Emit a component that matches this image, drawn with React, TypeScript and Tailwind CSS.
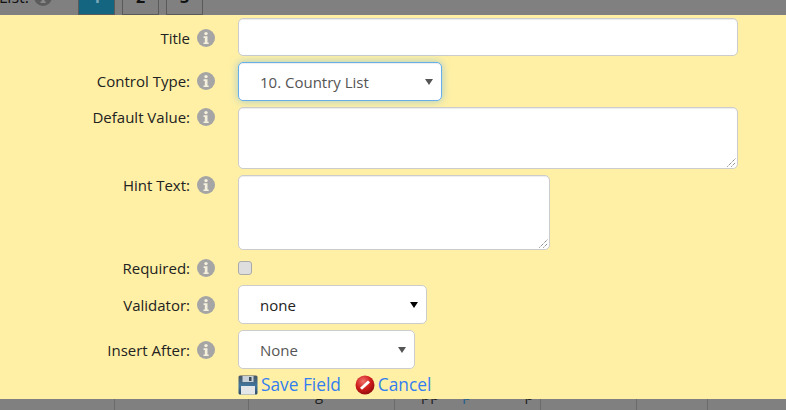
const font = { fontFamily: '"Open Sans", sans-serif' };

function InfoIcon({ className = "text-[#a5a5a5]", glyph = "#f4f0dc" }: { className?: string; glyph?: string }) {
  return (
    <svg viewBox="0 0 18 18" className={`h-[18px] w-[18px] shrink-0 ${className}`} aria-hidden="true">
      <circle cx="9" cy="9" r="9" fill="currentColor" />
      <circle cx="9" cy="4.6" r="1.7" fill={glyph} />
      <path d="M6.6 7.3h3.9v6.2h1.2v1.6H6.5v-1.6h1.3V8.9H6.6z" fill={glyph} />
    </svg>
  );
}

function SaveIcon() {
  return (
    <svg viewBox="0 0 20 20" className="h-5 w-5 shrink-0" aria-hidden="true">
      <defs>
        <linearGradient id="save-body" x1="0" y1="0" x2="0" y2="1">
          <stop offset="0%" stopColor="#4a5560" />
          <stop offset="55%" stopColor="#3f76a0" />
          <stop offset="100%" stopColor="#2f4c63" />
        </linearGradient>
      </defs>
      <rect x="0.5" y="0.5" width="19" height="19" rx="1.5" fill="url(#save-body)" />
      <rect x="4.5" y="1" width="11" height="6" fill="#c9d1d8" />
      <rect x="11" y="2" width="2.5" height="4" fill="#3c4a56" />
      <rect x="3" y="11" width="14" height="8.5" fill="#e4e7ea" />
    </svg>
  );
}

function CancelIcon() {
  return (
    <svg viewBox="0 0 20 20" className="h-5 w-5 shrink-0" aria-hidden="true">
      <defs>
        <radialGradient id="cancel-red" cx="40%" cy="30%" r="75%">
          <stop offset="0%" stopColor="#f0706a" />
          <stop offset="55%" stopColor="#cf1a1a" />
          <stop offset="100%" stopColor="#8c0c0c" />
        </radialGradient>
      </defs>
      <circle cx="10" cy="10" r="9.5" fill="url(#cancel-red)" />
      <path d="M5 12.8 13 5.4l2 2-8 7.4z" fill="#fff" />
    </svg>
  );
}

function FieldRow({ label, className, labelPad = "", children }: { label: string; className: string; labelPad?: string; children: React.ReactNode }) {
  return (
    <div className={`flex items-start ${className}`}>
      <div className={`flex w-[238px] shrink-0 items-center pr-[23px] ${labelPad}`}>
        <span className="flex-1 text-right text-[15px] leading-5 text-[#222]">{label}</span>
        <span className="ml-[7px]"><InfoIcon /></span>
      </div>
      {children}
    </div>
  );
}

function FakeSelect({ value, className, dark }: { value: string; className: string; dark?: boolean }) {
  return (
    <div className={`relative flex items-center rounded-[5px] border bg-white pl-[21px] pt-px text-[15px] ${className}`}>
      {value}
      <span className={`absolute right-[8px] top-1/2 h-0 w-0 -translate-y-[3px] border-x-[4px] border-t-[6px] border-x-transparent ${dark ? "border-t-black" : "border-t-[#555]"}`} />
    </div>
  );
}

function ResizeGrip() {
  return (
    <svg viewBox="0 0 9 9" className="absolute bottom-[1px] right-[1px] h-[9px] w-[9px]" aria-hidden="true">
      <path d="M0.5 8.5 8.5 0.5M4.5 8.5 8.5 4.5" stroke="#555" strokeDasharray="1 1" fill="none" />
    </svg>
  );
}

export default function App() {
  const inputClass = "rounded-[5px] border border-[#ccc] bg-white shadow-[inset_0_1px_1px_rgba(0,0,0,0.075)]";

  return (
    <div className="flex h-[410px] w-[786px] flex-col overflow-hidden bg-[#808080]" style={font}>
      {/* Dimmed page behind the dialog: tabs */}
      <div className="flex h-[15px] shrink-0 items-end text-[#111]">
        <div className="flex h-[36px] shrink-0 items-center">
          <span className="ml-[-1px] w-[35px] text-[16px] leading-[18px]">List:</span>
          <InfoIcon className="text-[#5c5c5c]" glyph="#8a8a8a" />
          <div className="ml-[26px] flex h-full w-[37px] items-center justify-center border border-[#5a5a5a] bg-[#146680] text-[16px] font-bold text-[#7fa9b8]">1</div>
          <div className="ml-[7px] flex h-full w-[37px] items-center justify-center border border-[#5a5a5a] text-[16px] font-bold">2</div>
          <div className="ml-[7px] flex h-full w-[37px] items-center justify-center border border-[#5a5a5a] text-[16px] font-bold">3</div>
        </div>
      </div>

      {/* Dialog */}
      <div className="h-[384px] shrink-0 bg-[#fff0a5] pt-[3px]">
        <FieldRow label="Title" className="h-[44px]" labelPad="pt-[10px]">
          <div className={`h-[38px] w-[500px] ${inputClass}`} />
        </FieldRow>
        <FieldRow label="Control Type:" className="h-[45px]" labelPad="pt-[9px]">
          <FakeSelect
            value="10. Country List"
            className="h-[39px] w-[204px] border-[#66afe9] text-[#555] shadow-[inset_0_1px_1px_rgba(0,0,0,0.075),0_0_8px_rgba(102,175,233,0.6)]"
          />
        </FieldRow>
        <FieldRow label="Default Value:" className="h-[68px]">
          <div className={`relative h-[62px] w-[500px] ${inputClass}`}>
            <ResizeGrip />
          </div>
        </FieldRow>
        <FieldRow label="Hint Text:" className="h-[81px]">
          <div className={`relative h-[75px] w-[312px] ${inputClass}`}>
            <ResizeGrip />
          </div>
        </FieldRow>
        <FieldRow label="Required:" className="h-[29px]" labelPad="pt-[2px]">
          <div className="mt-[5px] h-[14px] w-[14px] rounded-[3px] border border-[#aaa] bg-[#dedede]" />
        </FieldRow>
        <FieldRow label="Validator:" className="h-[45px]" labelPad="pt-[10px]">
          <FakeSelect value="none" dark className="h-[39px] w-[189px] border-[#ccc] text-[#222]" />
        </FieldRow>
        <FieldRow label="Insert After:" className="h-[45px]" labelPad="pt-[10px]">
          <FakeSelect value="None" className="h-[39px] w-[177px] border-[#ccc] text-[#555]" />
        </FieldRow>
        <div className="flex items-center pl-[238px] text-[17.3px] leading-5 text-[#337ef0]">
          <SaveIcon />
          <span className="ml-[3px]">Save Field</span>
          <span className="ml-[14px]"><CancelIcon /></span>
          <span className="ml-[3px]">Cancel</span>
        </div>
      </div>

      {/* Dimmed page behind the dialog: table row, only descenders show */}
      <div className="flex h-[11px] shrink-0 text-[15px] leading-5 text-[#222]">
        <div className="w-[115px] border-r border-[#6b6b6b]" />
        <div className="w-[134px] border-r border-[#6b6b6b]" />
        <div className="w-[146px] overflow-hidden border-r border-[#6b6b6b] pl-[66px]">
          <span className="-mt-[15px] block">g</span>
        </div>
        <div className="flex w-[146px] overflow-hidden border-r border-[#6b6b6b] pl-[26px]">
          <span className="-mt-[15px] block">pp</span>
          <span className="-mt-[15px] ml-[23px] block text-[#1f5f8f]">p</span>
          <span className="-mt-[15px] ml-[53px] block">p</span>
        </div>
        <div className="w-[96px] border-r border-[#6b6b6b]" />
        <div className="w-[71px] border-r border-[#6b6b6b]" />
      </div>
    </div>
  );
}
